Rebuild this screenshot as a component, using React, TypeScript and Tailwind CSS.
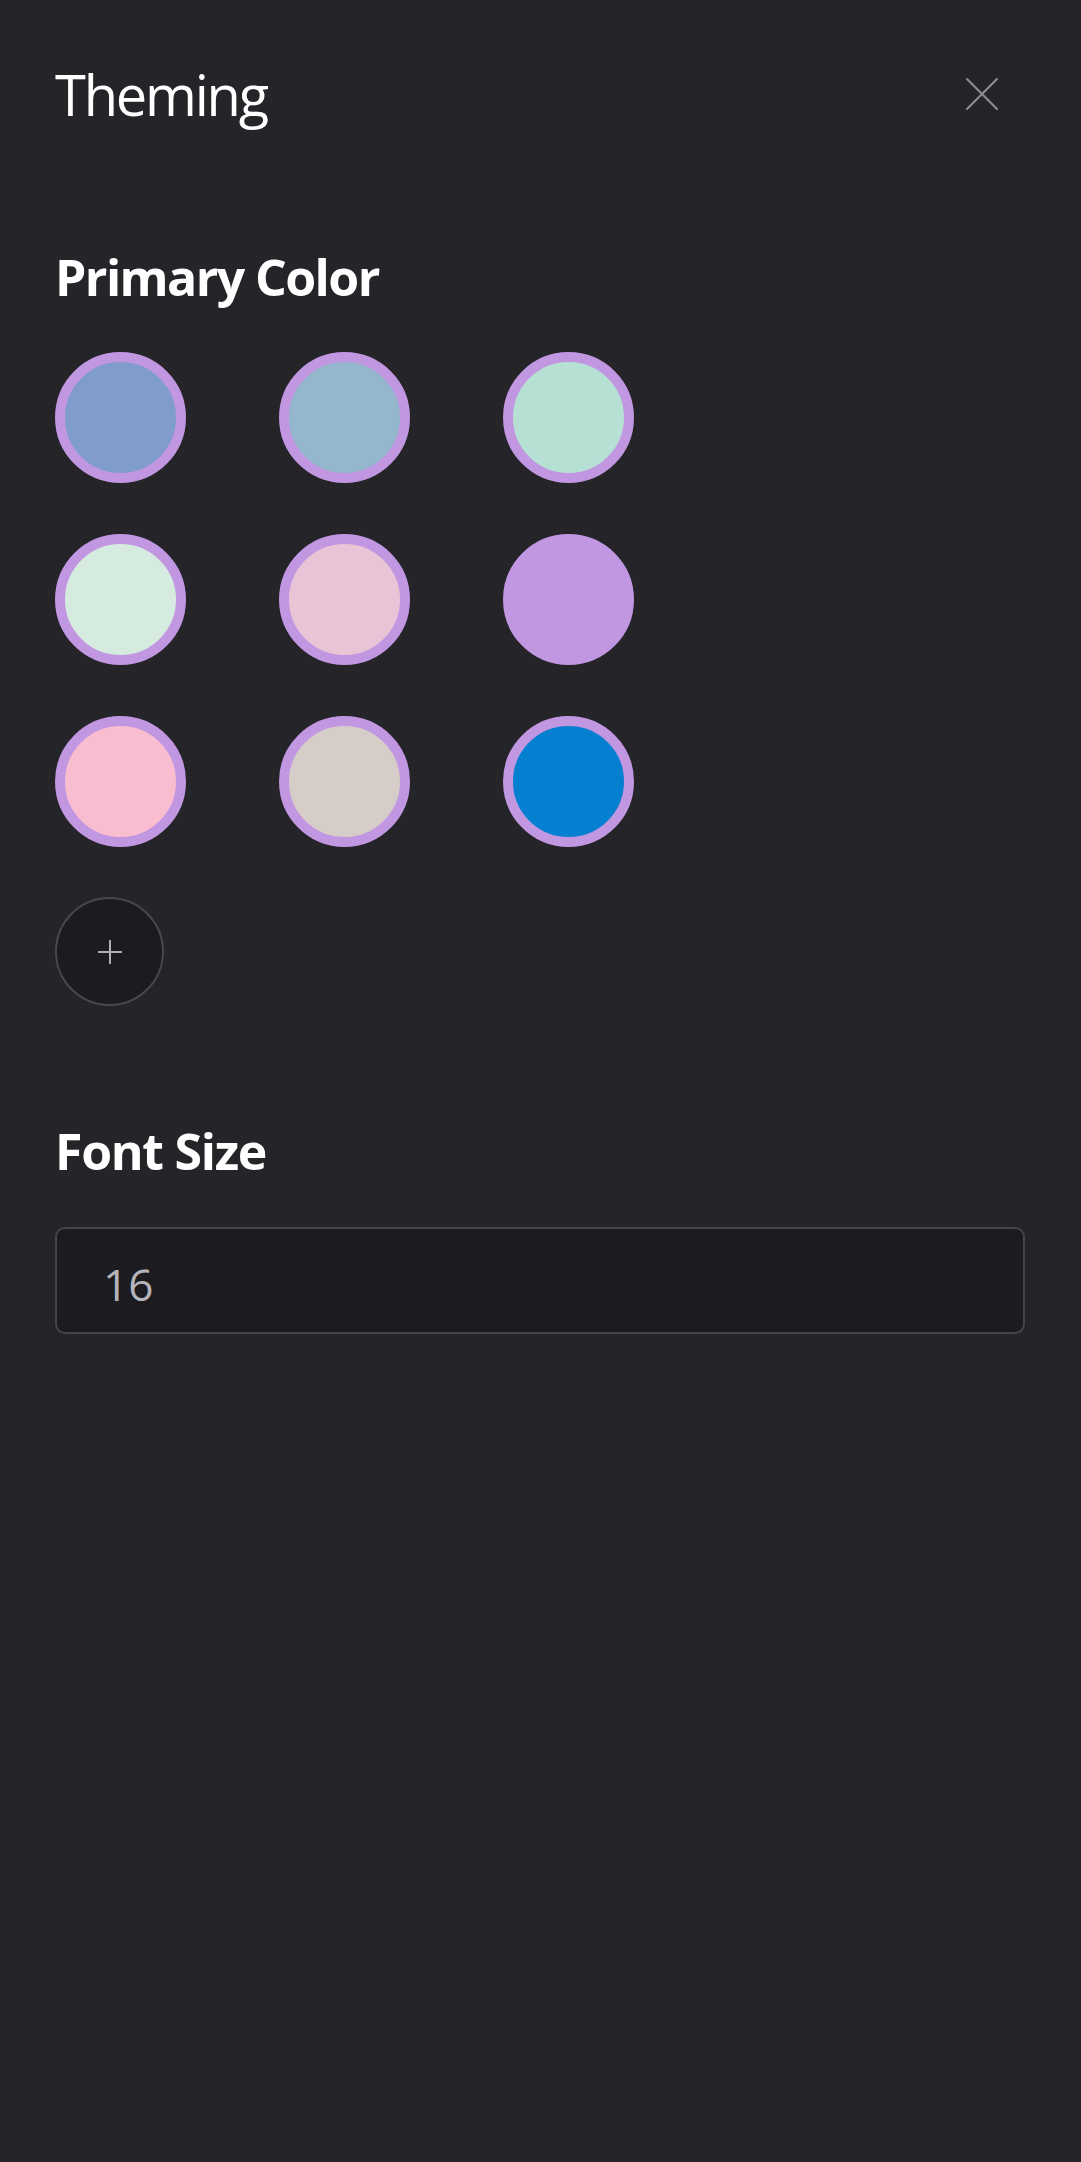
import React from "react";

const swatches = [
  "#7f9ccb",
  "#94b7cd",
  "#b6e0d4",
  "#d6ebe0",
  "#e9c4d6",
  "#c197e2",
  "#f9bdd0",
  "#d7cdc8",
  "#057fcf",
];

export default function App() {
  return (
    <div
      className="min-h-screen bg-[#242429] px-[55px] text-white"
      style={{ fontFamily: '"Open Sans", "Noto Sans", sans-serif' }}
    >
      <div className="flex items-center justify-between pt-[66px]">
        <h1 className="text-[56px] leading-[56px] font-normal tracking-[-2.2px]">Theming</h1>
        <button className="mr-[28px] flex h-[32px] w-[32px] items-center justify-center" aria-label="Close">
          <svg width="32" height="32" viewBox="0 0 32 32" fill="none">
            <path d="M1 1 L31 31 M31 1 L1 31" stroke="#8b8a93" strokeWidth="2.2" strokeLinecap="round" />
          </svg>
        </button>
      </div>

      <h2 className="mt-[130px] text-[50px] leading-[50px] font-bold tracking-[-1.6px]">Primary Color</h2>

      <div className="mt-[50px] grid grid-cols-[131px_131px_131px] gap-x-[93px] gap-y-[51px]">
        {swatches.map((c, i) => (
          <button
            key={i}
            className="h-[131px] w-[131px] rounded-full border-[10px] border-[#c197e2]"
            style={{ backgroundColor: c }}
          />
        ))}
      </div>

      <button className="mt-[50px] flex h-[109px] w-[109px] items-center justify-center rounded-full border-2 border-[#48474d] bg-[#1c1b20]">
        <svg width="26" height="26" viewBox="0 0 26 26" fill="none">
          <path d="M13 1 V25 M1 13 H25" stroke="#b0b0b6" strokeWidth="2" />
        </svg>
      </button>

      <h2 className="mt-[120px] text-[50px] leading-[50px] font-bold tracking-[-1.3px]">Font Size</h2>

      <div className="mt-[51px] flex h-[107px] w-[970px] items-center rounded-[10px] border-2 border-[#45444a] bg-[#1c1b20] pl-[46px]">
        <span className="pt-[6px] text-[44px] leading-[44px] text-[#b5b4bb]">16</span>
      </div>
    </div>
  );
}
